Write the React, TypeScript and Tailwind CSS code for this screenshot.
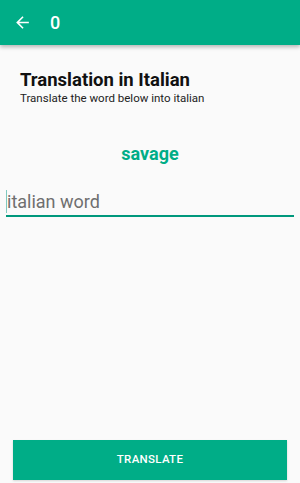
import React, { useState } from 'react';

export default function App() {
  const [word, setWord] = useState('');

  return (
    <div
      className="w-[300px] h-[483px] bg-[#fafafa] flex flex-col overflow-hidden"
      style={{ fontFamily: 'Roboto, "Noto Sans", sans-serif' }}
    >
      {/* toolbar */}
      <div className="h-[45px] bg-[#00ad87] flex items-center pl-[13px] shadow-[0_2px_4px_rgba(0,0,0,0.28)] relative z-10 shrink-0">
        <svg width="19" height="19" viewBox="0 0 24 24" className="text-white">
          <path d="M20 11H7.83l5.59-5.59L12 4l-8 8 8 8 1.41-1.41L7.83 13H20v-2z" fill="currentColor" />
        </svg>
        <span className="ml-[18px] text-white text-[18px] font-medium leading-none">0</span>
      </div>

      <div className="flex-1 flex flex-col">
        <div className="pt-[24px] pl-[20px]">
          <h1 className="text-[18.5px] font-bold text-[#111] leading-[22px]">Translation in Italian</h1>
          <p className="text-[11.5px] text-[#222] leading-[14px]">Translate the word below into italian</p>
        </div>

        <div className="mt-[38px] text-center text-[#00ad87] text-[18px] font-bold leading-[22px]">savage</div>

        <div className="mt-[23px] mx-[6px] border-b-2 border-[#00987c] relative">
          <span className="absolute left-0 top-[2px] w-px h-[23px] bg-[#7fc9c0]" />
          <input
            value={word}
            onChange={(e) => setWord(e.target.value)}
            placeholder="italian word"
            className="w-full bg-transparent outline-none text-[18px] leading-[27px] pl-px text-[#333] placeholder:text-[#6f6f6f]"
          />
        </div>

        <div className="mt-auto px-[13px] pb-[3px]">
          <button className="w-full h-[40px] bg-[#00ad87] text-white text-[11.5px] font-medium tracking-[0.3px] shadow-[0_1px_2px_rgba(0,0,0,0.15)]">
            TRANSLATE
          </button>
        </div>
      </div>
    </div>
  );
}
